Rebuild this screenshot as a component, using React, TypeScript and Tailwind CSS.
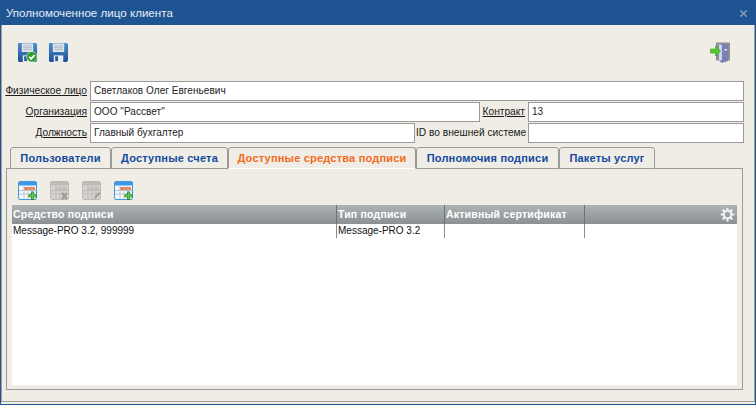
import React from 'react';
import { X } from 'lucide-react';

const font = { fontFamily: '"Liberation Sans", Arial, sans-serif' };

const FloppyIcon: React.FC<{ check?: boolean }> = ({ check }) => (
  <svg width="21" height="21" viewBox="0 0 22 22">
    <defs>
      <linearGradient id="fl" x1="0" y1="0" x2="0" y2="1">
        <stop offset="0" stopColor="#4a8fd0" />
        <stop offset="1" stopColor="#1c4f92" />
      </linearGradient>
    </defs>
    <path d="M2 1h17a2 2 0 0 1 2 2v15a3 3 0 0 1-3 3H3a2 2 0 0 1-2-2V2a1 1 0 0 1 1-1z" fill="url(#fl)" />
    <rect x="5" y="1.5" width="12" height="9" fill="#dfe5ec" />
    <path d="M6.5 4h9M6.5 6h9M6.5 8h9" stroke="#aab6c4" strokeWidth="1" />
    <rect x="6" y="14" width="10" height="7" fill="#e8edf3" />
    <rect x="7.5" y="15" width="3" height="5" fill="#2a5c9c" />
    {check && (
      <g>
        <circle cx="15.5" cy="15.5" r="5.5" fill="#2f9e2f" stroke="#e8f6e8" strokeWidth="0.6" />
        <path d="M12.8 15.5l2 2.2 3.6-4" stroke="#fff" strokeWidth="1.8" fill="none" />
      </g>
    )}
  </svg>
);

const GridIcon: React.FC<{ kind: 'add' | 'del' | 'edit' }> = ({ kind }) => {
  const on = kind === 'add';
  return (
    <svg width="20" height="20" viewBox="0 0 20 20">
      <rect x="0.5" y="0.5" width="18" height="18" rx="1.5" fill={on ? '#f4f6f8' : '#d6d4cf'} stroke={on ? '#3f97e6' : '#bdbbb6'} />
      <rect x="1" y="1" width="17" height="3.5" fill={on ? '#3f97e6' : '#bdbbb6'} />
      <rect x="6" y="6" width="11" height="3" fill={on ? '#f07a4a' : '#c4c2bd'} />
      <path d="M1 9.5h17M1 13h17M6 5v13M10 5v13M14 5v13" stroke={on ? '#b9c6d6' : '#bdbbb6'} strokeWidth="1" />
      {kind === 'add' && <path d="M14.5 10.5v8.5M10.5 14.75h8" stroke="#2a8f2a" strokeWidth="3" />}
      {kind === 'add' && <path d="M14.5 11.5v6.5M11.5 14.75h6" stroke="#62d04e" strokeWidth="1.4" />}
      {kind === 'del' && <path d="M12 12l5 6M17 12l-5 6" stroke="#9d9b96" strokeWidth="2.2" />}
      {kind === 'edit' && <path d="M12 18l1-3 4-4 1.5 1.5-4 4z" fill="#9d9b96" />}
    </svg>
  );
};

const ExitIcon: React.FC = () => (
  <svg width="21" height="21" viewBox="0 0 21 21">
    <rect x="6" y="0.5" width="14" height="18" fill="#8d8d92" />
    <path d="M9 2h9v17l-6 2-3-2z" fill="#7c7eb4" />
    <path d="M9 2l3 1v15l-3 1z" fill="#c4d8f0" />
    <rect x="14.5" y="7" width="2.5" height="1.6" fill="#dfe0ef" />
    <path d="M0.5 7h5V4l5 5-5 5v-3h-5z" fill="#5ac832" stroke="#3d9a1f" strokeWidth="0.6" />
  </svg>
);

const Input: React.FC<{ value?: string; className: string }> = ({ value, className }) => (
  <div className={`h-[20px] bg-white border border-[#9a9a96] pl-[3px] text-[10px] leading-[18px] tracking-[0.05px] text-[#222] ${className}`}>{value}</div>
);

const Label: React.FC<{ text: string; className: string }> = ({ text, className }) => (
  <span className={`text-[10.2px] leading-[20px] text-[#1a1a1a] underline text-right whitespace-nowrap ${className}`}>{text}</span>
);

const tabs = [
  { name: 'Пользователи', w: 'w-[101px]' },
  { name: 'Доступные счета', w: 'w-[117px]' },
  { name: 'Доступные средства подписи', w: 'w-[188px]', active: true },
  { name: 'Полномочия подписи', w: 'w-[143px]' },
  { name: 'Пакеты услуг', w: 'w-[96px]' },
];

const cols = [
  { name: 'Средство подписи', w: 'w-[325px]', cell: 'Message-PRO 3.2, 999999' },
  { name: 'Тип подписи', w: 'w-[108px]', cell: 'Message-PRO 3.2' },
  { name: 'Активный сертификат', w: 'w-[140px]', cell: '' },
];

export default function App() {
  return (
    <div className="w-[756px] h-[405px] overflow-hidden flex flex-col bg-[#1f5493]" style={font}>
      <div className="h-[25px] flex items-center justify-between pt-[1px] pl-[6px] pr-[7px] text-[11.6px] text-[#e6edf5] shrink-0">
        <span>Уполномоченное лицо клиента</span>
        <X size={11} strokeWidth={3} className="text-[#8fa3bb]" />
      </div>

      <div className="flex-1 mx-[1px] mb-[1px] bg-[#f0ede6] pb-[2px] flex flex-col min-h-0">
        <div className="flex-1 border-x border-b border-[#a3a19b] flex flex-col min-h-0">
          <div className="h-[56px] flex items-center justify-between pb-[2px] pl-[15px] pr-[23px] shrink-0">
            <div className="flex gap-[10px]">
              <FloppyIcon check />
              <FloppyIcon />
            </div>
            <ExitIcon />
          </div>

          <div className="flex flex-col gap-[1px] pr-[10px]">
            <div className="flex items-center">
              <Label text="Физическое лицо" className="w-[85px]" />
              <Input value="Светлаков Олег Евгеньевич" className="ml-[3px] flex-1" />
            </div>
            <div className="flex items-center">
              <Label text="Организация" className="w-[85px]" />
              <Input value='ООО "Рассвет"' className="ml-[3px] w-[390px]" />
              <Label text="Контракт" className="ml-[2px] w-[43px]" />
              <Input value="13" className="ml-[3px] flex-1" />
            </div>
            <div className="flex items-center">
              <Label text="Должность" className="w-[85px]" />
              <Input value="Главный бухгалтер" className="ml-[3px] w-[325px]" />
              <span className="ml-[1px] w-[112px] text-[10.2px] leading-[20px] text-[#1a1a1a] whitespace-nowrap">ID во внешней системе</span>
              <Input className="flex-1" />
            </div>
          </div>

          <div className="mt-[4px] ml-[4px] mr-[11px] flex flex-col flex-1 min-h-0 mb-[11px]">
            <div className="flex h-[22px] pl-[4px] relative z-10 shrink-0">
              {tabs.map(t => (
                <div
                  key={t.name}
                  className={`${t.w} h-[22px] border-t border-l border-r border-[#9a9a96] rounded-t-[3px] text-center text-[11px] font-bold leading-[21px] tracking-[0.2px] whitespace-nowrap ${
                    t.active ? 'text-[#f26a1b] bg-[#f0ede6] border-b border-b-white' : 'text-[#114a9e] bg-[#f0ede6] border-b border-b-[#9a9a96]'
                  }`}
                >
                  {t.name}
                </div>
              ))}
            </div>

            <div className="-mt-[1px] flex-1 border border-[#9a9a96] bg-[#f0ede6] px-[5px] pb-[4px] flex flex-col min-h-0">
              <div className="h-[36px] flex items-start pt-[12px] gap-[12px] pl-[6px] shrink-0">
                <GridIcon kind="add" />
                <GridIcon kind="del" />
                <GridIcon kind="edit" />
                <GridIcon kind="add" />
              </div>
              <div className="flex-1 bg-white flex flex-col min-h-0">
                <div className="h-[19px] flex bg-gradient-to-b from-[#aeb3b6] to-[#8b9093] shrink-0">
                  {cols.map(c => (
                    <div key={c.name} className={`${c.w} border-r border-[#6f7376] pl-[1px] text-[10.5px] font-bold leading-[19px] tracking-[0.2px] text-white whitespace-nowrap`}>
                      {c.name}
                    </div>
                  ))}
                  <div className="flex-1 flex items-center justify-end pr-[2px]">
                    <svg width="15" height="15" viewBox="0 0 24 24" fill="none" stroke="#eef0f1" strokeWidth="3.4">
                      <circle cx="12" cy="12" r="6" />
                      <path d="M12 1v4M12 19v4M1 12h4M19 12h4M4.2 4.2l2.8 2.8M17 17l2.8 2.8M4.2 19.8l2.8-2.8M17 7l2.8-2.8" />
                    </svg>
                  </div>
                </div>
                <div className="flex h-[14px]">
                  {cols.map(c => (
                    <div key={c.name} className={`${c.w} border-r border-[#8b8b8b] pl-[1px] text-[10px] leading-[14px] text-[#111] whitespace-nowrap`}>
                      {c.cell}
                    </div>
                  ))}
                </div>
              </div>
            </div>
          </div>
        </div>
      </div>
    </div>
  );
}
